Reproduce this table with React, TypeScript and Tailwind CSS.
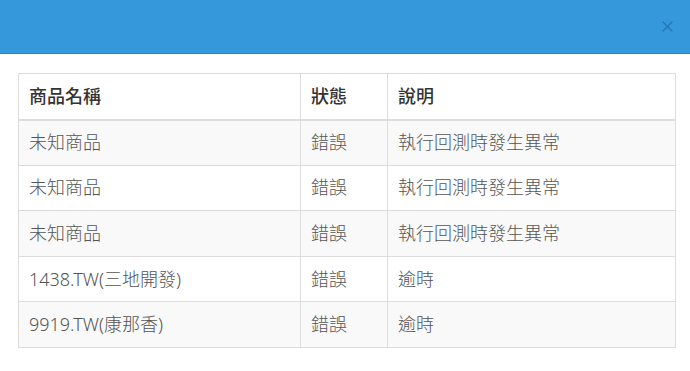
import React from 'react';

const rows = [
  { name: '未知商品', status: '錯誤', desc: '執行回測時發生異常' },
  { name: '未知商品', status: '錯誤', desc: '執行回測時發生異常' },
  { name: '未知商品', status: '錯誤', desc: '執行回測時發生異常' },
  { name: '1438.TW(三地開發)', status: '錯誤', desc: '逾時' },
  { name: '9919.TW(康那香)', status: '錯誤', desc: '逾時' },
];

const font = { fontFamily: '"Noto Sans", "Noto Sans CJK TC", sans-serif' };

export default function App() {
  return (
    <div className="w-[690px] h-[371px] bg-white overflow-hidden" style={font}>
      <div className="h-[54px] bg-[#3498db] border-b border-[#2e86c1] flex items-center justify-end pr-[17px]">
        <button className="opacity-70">
          <svg width="11" height="11" viewBox="0 0 11 11" stroke="#2468a0" strokeWidth="1.3" strokeLinecap="round">
            <path d="M1 1 L10 10 M10 1 L1 10" />
          </svg>
        </button>
      </div>
      <div className="px-[18px] pt-[19px]">
        <table className="w-[658px] border-collapse border border-[#dddddd] text-[18px]">
          <thead>
            <tr className="bg-white">
              <th className="w-[282px] h-[46px] px-[10px] text-left font-medium text-[#333] border border-[#dddddd] border-b-2">商品名稱</th>
              <th className="w-[87px] h-[46px] px-[10px] text-left font-medium text-[#333] border border-[#dddddd] border-b-2">狀態</th>
              <th className="h-[46px] px-[10px] text-left font-medium text-[#333] border border-[#dddddd] border-b-2">說明</th>
            </tr>
          </thead>
          <tbody>
            {rows.map((r, i) => (
              <tr key={i} className={i % 2 === 0 ? 'bg-[#f9f9f9]' : 'bg-white'}>
                <td className="h-[45.6px] px-[10px] text-[#555] font-light border border-[#dddddd]">{r.name}</td>
                <td className="h-[45.6px] px-[10px] text-[#555] font-light border border-[#dddddd]">{r.status}</td>
                <td className="h-[45.6px] px-[10px] text-[#555] font-light border border-[#dddddd]">{r.desc}</td>
              </tr>
            ))}
          </tbody>
        </table>
      </div>
    </div>
  );
}
